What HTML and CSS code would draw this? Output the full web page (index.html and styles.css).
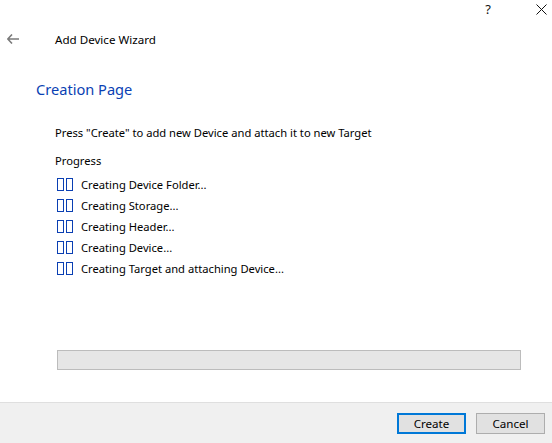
FILE: index.html
```html
<!DOCTYPE html>
<html lang="en">
<head>
<meta charset="utf-8">
<title>Add Device Wizard</title>
<link rel="stylesheet" href="styles.css">
</head>
<body>
<div class="window">
  <div class="caption">
    <span class="cap-btn help">?</span>
    <span class="cap-btn close">
      <svg width="11" height="11" viewBox="0 0 11 11"><path d="M0.5 0.5 L10.5 10.5 M10.5 0.5 L0.5 10.5" stroke="#111" stroke-width="1" fill="none"/></svg>
    </span>
  </div>
  <div class="nav">
    <svg class="back" width="12" height="10" viewBox="0 0 12 10"><path d="M5 0.5 L0.8 5 L5 9.5 M0.8 5 H12" stroke="#7a7a7a" stroke-width="1.6" fill="none"/></svg>
    <span class="nav-title">Add Device Wizard</span>
  </div>
  <main class="page">
    <h1 class="page-title">Creation Page</h1>
    <div class="body">
      <p class="intro">Press "Create" to add new Device and attach it to new Target</p>
      <p class="label">Progress</p>
      <ul class="steps">
        <li class="step"><span class="glyphs"><i></i><i></i></span>Creating Device Folder...</li>
        <li class="step"><span class="glyphs"><i></i><i></i></span>Creating Storage...</li>
        <li class="step"><span class="glyphs"><i></i><i></i></span>Creating Header...</li>
        <li class="step"><span class="glyphs"><i></i><i></i></span>Creating Device...</li>
        <li class="step"><span class="glyphs"><i></i><i></i></span>Creating Target and attaching Device...</li>
      </ul>
      <div class="progress"></div>
    </div>
  </main>
  <footer class="footer">
    <button class="btn default">Create</button>
    <button class="btn">Cancel</button>
  </footer>
</div>
</body>
</html>
```

FILE: styles.css
```css
html, body {
  margin: 0;
  padding: 0;
  background: #fff;
}

.window {
  width: 552px;
  height: 443px;
  display: flex;
  flex-direction: column;
  font-family: "Noto Sans", "Open Sans", sans-serif;
  font-size: 11.2px;
  color: #000;
  overflow: hidden;
}

.caption {
  height: 18px;
  display: flex;
  justify-content: flex-end;
  align-items: center;
}

.cap-btn {
  height: 18px;
  display: flex;
  justify-content: center;
  align-items: center;
}

.help {
  width: 20px;
  font-size: 13px;
  color: #111;
  margin-right: 32px;
}

.close {
  width: 22px;
}

.close svg {
  display: block;
}

.nav {
  height: 42px;
  display: flex;
  align-items: center;
}

.back {
  margin-left: 7px;
  margin-right: 36px;
}

.nav-title {
  font-size: 11.6px;
}

.page {
  flex: 1;
  padding-left: 36px;
}

.page-title {
  margin: 19px 0 0;
  font-size: 14.6px;
  font-weight: normal;
  color: #0a3fb3;
  line-height: 20px;
}

.body {
  padding-left: 19px;
}

.intro {
  margin: 26px 0 0;
  line-height: 16px;
}

.label {
  margin: 12px 0 0;
  line-height: 16px;
}

.steps {
  list-style: none;
  margin: 5px 0 0 2px;
  padding: 0;
}

.step {
  height: 21px;
  display: flex;
  align-items: center;
}

.glyphs {
  display: flex;
  gap: 2px;
  margin-right: 8px;
}

.glyphs i {
  display: block;
  width: 5px;
  height: 11px;
  border: 1px solid #0a3fb3;
}

.progress {
  margin: 71px 0 0 2px;
  width: 462px;
  height: 18px;
  background: #e6e6e6;
  border: 1px solid #bcbcbc;
}

.footer {
  height: 40px;
  background: #f0f0f0;
  border-top: 1px solid #dfdfdf;
  display: flex;
  justify-content: flex-end;
  align-items: center;
  gap: 10px;
  padding-right: 7px;
}

.btn {
  width: 69px;
  height: 21px;
  font-family: inherit;
  font-size: 11.6px;
  background: #e1e1e1;
  border: 1px solid #adadad;
  padding: 0;
  color: #000;
}

.btn.default {
  border: 2px solid #0078d7;
}
```
